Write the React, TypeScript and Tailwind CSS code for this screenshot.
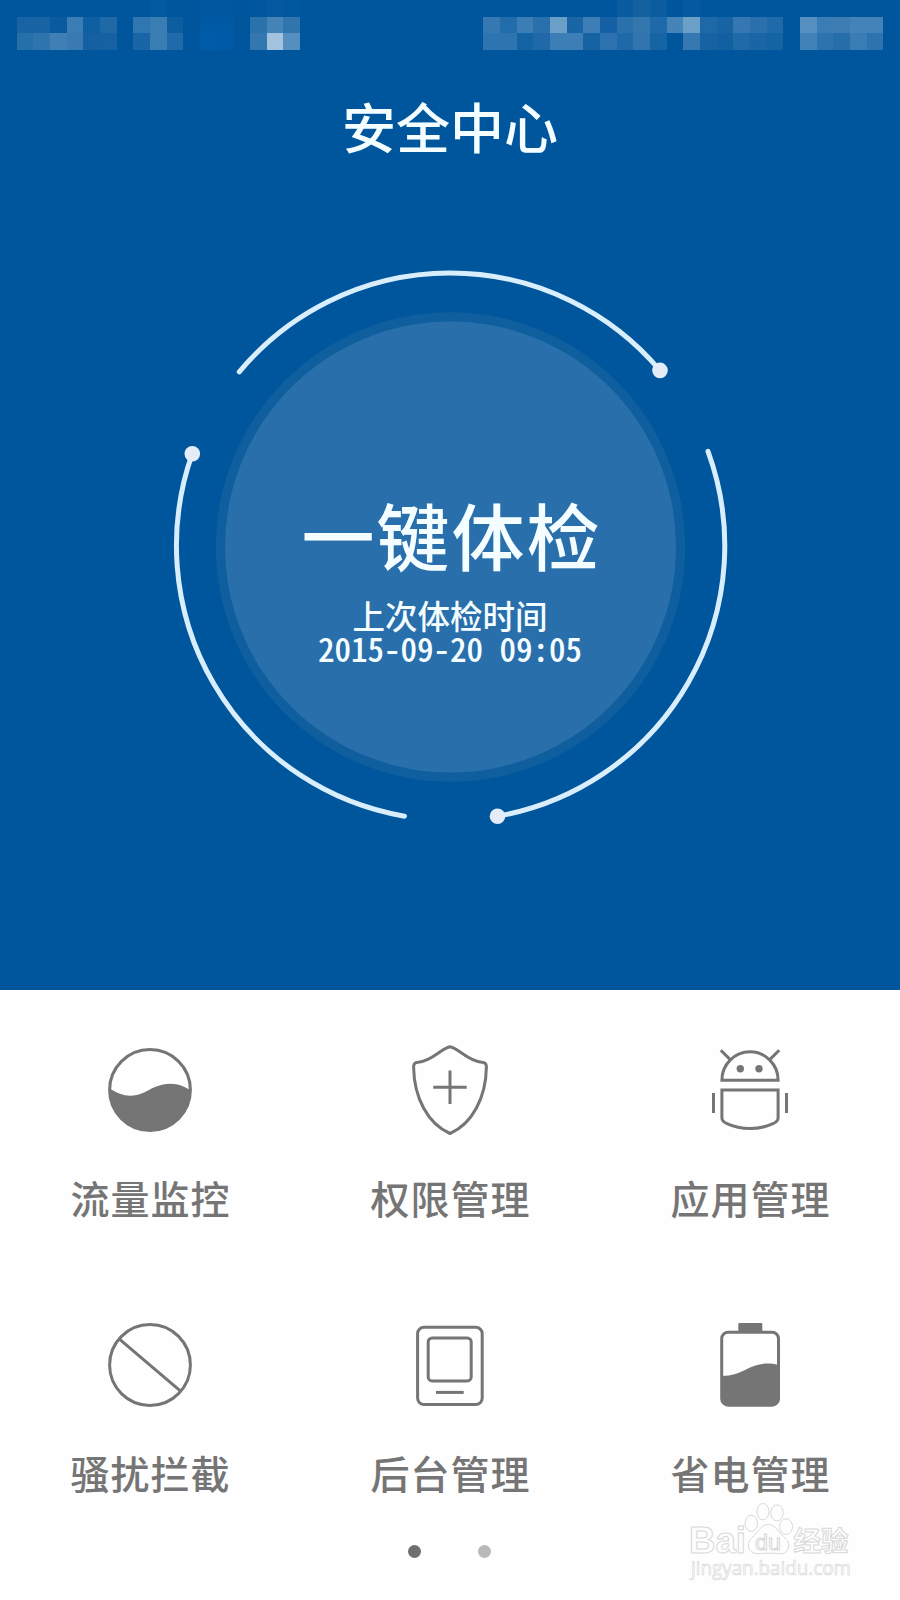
import type { ReactNode } from 'react';

// Status bar mosaic: [column, row, colours], 54 columns x 3 rows
const MOSAIC: [number, number, string[]][] = [
  [9, 0, ['#045a9e']],
  [12, 0, ['#0058a0', '#0058a0']],
  [15, 0, ['#00579f', '#06599f', '#02589d']],
  [37, 0, ['#095c9f', '#1461a2', '#0b5da0']],
  [41, 0, ['#06599f']],
  [1, 1, ['#1763a3', '#1763a3', '#085b9f', '#3a7cb4', '#0e5fa2', '#1f6aa6']],
  [1, 2, ['#2670aa', '#2e74ad', '#3f7fb4', '#387ab1', '#1460a2', '#1661a2']],
  [8, 1, ['#3076b0', '#3a7db3', '#0d5ea1']],
  [8, 2, ['#1a65a5', '#3a7db3', '#1f6aa8']],
  [12, 1, ['#0059a5', '#0059a5']],
  [12, 2, ['#005bab', '#005aa8']],
  [15, 1, ['#2a72ac', '#4584b8', '#3075ae']],
  [15, 2, ['#3377b0', '#a3c2de', '#558fbf']],
  [29, 1, ['#3578b2', '#216cab', '#3b7db4', '#2a70ad', '#6a9fc8', '#1a65a6', '#3d7eb6', '#1560a4', '#2a71ab', '#3477ae', '#1e69a9', '#4584b9', '#6a9fc8', '#1d68a6', '#1763a3', '#3577b0', '#2a70ac', '#1f6aa8']],
  [29, 2, ['#2e74b0', '#2e74b0', '#1463a4', '#2069a8', '#3d7eb6', '#3d7eb6', '#1563a2', '#2d72ae', '#1d69a9', '#3075ae', '#1565a5', '#00569c', '#3679b2', '#1663a3', '#1160a2', '#206aa8', '#1a65a6', '#1463a3']],
  [48, 1, ['#5590c0', '#3a7cb4', '#3d7db4', '#4383b8', '#4383b8']],
  [48, 2, ['#4182b8', '#2d73ae', '#266eaa', '#3a7cb4', '#2d73ae']],
];

function StatusBar() {
  return (
    <svg className="block h-[50px] w-[900px]" viewBox="0 0 54 3" shapeRendering="crispEdges">
      {MOSAIC.map(([col, row, colors]) =>
        colors.map((color, i) => (
          <rect key={`${row}-${col + i}`} x={col + i} y={row} width={1} height={1} fill={color} />
        ))
      )}
    </svg>
  );
}

function Dial() {
  return (
    <svg className="absolute inset-0 h-full w-full" viewBox="170 267 560 560" fill="none">
      <circle cx="450.5" cy="547" r="234.7" fill="#0f5f9f" />
      <circle cx="450.5" cy="547" r="225.5" fill="#296fab" />
      <g stroke="#d9eefc" strokeWidth="5" strokeLinecap="round">
        <path d="M239.3 371.8A274.5 274.5 0 0 1 660 370.5" />
        <path d="M708 451.3A274.5 274.5 0 0 1 497.5 816.2" />
        <path d="M404.5 816.2A274.5 274.5 0 0 1 192.3 453.7" />
      </g>
      <g fill="#e4edf7">
        <circle cx="660" cy="370.4" r="7.8" />
        <circle cx="497.5" cy="816.2" r="7.8" />
        <circle cx="192.3" cy="453.8" r="7.8" />
      </g>
    </svg>
  );
}

function Icon({ children }: { children: ReactNode }) {
  return (
    <svg className="h-[90px] w-[90px] shrink-0 text-[#757575]" viewBox="0 0 90 90" fill="none" stroke="currentColor" strokeWidth={3}>
      {children}
    </svg>
  );
}

const FEATURES: { label: string; icon: ReactNode }[] = [
  {
    label: '流量监控',
    icon: (
      <>
        <circle cx="45" cy="45" r="40.4" />
        <path
          d="M4.6 43.5C12 48 18 50.7 25 50.7C35 50.7 40 47 47 43.3C54 40 60 38.7 66 38.7C73 38.7 79 41.5 85.4 45A40.4 40.4 0 0 1 4.6 45Z"
          fill="currentColor"
          stroke="none"
        />
      </>
    ),
  },
  {
    label: '权限管理',
    icon: (
      <>
        <path
          d="M45 1.8C35 4 27 16.2 13 17.3Q8.6 17.5 8.6 22C9 53 23 79 45 88.5C67 79 81 53 81.4 22Q81.4 17.5 77 17.3C63 16.2 55 4 45 1.8Z"
          strokeLinejoin="round"
        />
        <path d="M45 25.5V59M28.3 42.2H61.7" />
      </>
    ),
  },
  {
    label: '应用管理',
    icon: (
      <>
        <path d="M16.9 35.2A28.1 28.4 0 0 1 73.1 35.2Z" />
        <path d="M15.8 5.2L25 14.4M74.2 5.2L65 14.4" />
        <circle cx="35.3" cy="23.7" r="3.7" fill="currentColor" stroke="none" />
        <circle cx="54" cy="23.7" r="3.7" fill="currentColor" stroke="none" />
        <path d="M16.9 44.9H73.1V73Q73 76.5 68 78.7C54 85.2 36 85.2 22 78.7Q17 76.5 16.9 73Z" />
        <path d="M8.5 48V68M81.5 48V68" />
      </>
    ),
  },
  {
    label: '骚扰拦截',
    icon: (
      <>
        <circle cx="45" cy="45" r="40.4" />
        <path d="M14.7 19.3L75 70.7" />
      </>
    ),
  },
  {
    label: '后台管理',
    icon: (
      <>
        <rect x="12.6" y="7.2" width="64.6" height="77.4" rx="6.5" />
        <rect x="23.2" y="17.9" width="43" height="43" rx="4" />
        <path d="M31 72.4H58.7" />
      </>
    ),
  },
  {
    label: '省电管理',
    icon: (
      <>
        <rect x="16.7" y="12.2" width="56.8" height="73" rx="6.5" />
        <path d="M33.3 12V4Q33.3 3 34.3 3H56.3Q57.3 3 57.3 4V12Z" fill="currentColor" stroke="none" />
        <path
          d="M17 56C27 56 34 53 42 49C50 44.5 62 41.5 73 45V79Q73 85 67 85H23Q17 85 17 79Z"
          fill="currentColor"
          stroke="none"
        />
      </>
    ),
  },
];

function Watermark() {
  return (
    <svg
      className="absolute left-[680px] top-[1496px] h-[90px] w-[180px]"
      viewBox="680 1496 180 90"
      fill="#fefefe"
      stroke="#d8d8d8"
      strokeWidth={1}
    >
      <text x="689" y="1553" className="font-['Liberation_Sans',sans-serif] text-[36px] font-bold" textLength="57" lengthAdjust="spacingAndGlyphs">
        Bai
      </text>
      <ellipse cx="751.3" cy="1523.3" rx="6.2" ry="8" />
      <ellipse cx="763" cy="1511.7" rx="6" ry="8.2" />
      <ellipse cx="777" cy="1512.9" rx="6.2" ry="8" />
      <ellipse cx="786" cy="1526.6" rx="6.5" ry="7.8" />
      <path d="M768.3 1524.5C775 1524.5 777.5 1530.5 782 1535C787 1539.5 789 1542 788.7 1546C788 1552 784 1554 779 1553.7C774 1553 764 1553 759 1553.7C753 1554 748.5 1551 748.3 1545C748.3 1541 751 1538.5 755 1534.5C759.5 1530 762 1524.5 768.3 1524.5Z" />
      <text x="755" y="1550" className="font-['Liberation_Sans',sans-serif] text-[22px]" textLength="26" lengthAdjust="spacingAndGlyphs">
        du
      </text>
      <text x="793.5" y="1550.5" className="font-['Noto_Sans_CJK_SC',sans-serif] text-[27.5px] font-bold">
        经验
      </text>
      <text x="691" y="1575" className="font-['Open_Sans',sans-serif] text-[20px]" strokeWidth={0.7} textLength="160" lengthAdjust="spacingAndGlyphs">
        jingyan.baidu.com
      </text>
    </svg>
  );
}

export default function App() {
  return (
    <div className="relative h-[1600px] w-[900px] overflow-hidden bg-[#fefefe] font-['Noto_Sans_CJK_SC',sans-serif]">
      <section className="flex h-[990px] flex-col items-center bg-[#00569c] text-[#f4fdff]">
        <StatusBar />
        <h1 className="mt-[46px] text-[54px] leading-[60px] font-medium">安全中心</h1>

        <button className="relative mt-[111px] flex h-[560px] w-[560px] flex-col items-center pt-[226px]">
          <Dial />
          <span className="relative pl-[3px] text-[73px] leading-[80px] font-medium tracking-[2px]">一键体检</span>
          <span className="relative mt-[25px] text-[32.5px] leading-[33px] font-medium">上次体检时间</span>
          <span className="relative mt-px text-[33px] leading-[33px] font-medium whitespace-pre [font-feature-settings:'hwid']">
            2015-09-20 09:05
          </span>
        </button>
      </section>

      <nav className="grid grid-cols-3 gap-y-[99px] pt-[55px]">
        {FEATURES.map(({ label, icon }) => (
          <button key={label} className="flex h-[176px] flex-col items-center">
            <Icon>{icon}</Icon>
            <span className="mt-[38px] pl-px text-[39px] leading-[48px] font-medium tracking-[1px] text-[#757575]">{label}</span>
          </button>
        ))}
      </nav>

      {/* Page indicator */}
      <div className="mt-[49px] flex justify-center gap-[57px] pr-[2px]">
        <span className="h-[13px] w-[13px] rounded-full bg-[#6f6f6f]" />
        <span className="h-[13px] w-[13px] rounded-full bg-[#b9b9b9]" />
      </div>

      <Watermark />
    </div>
  );
}
